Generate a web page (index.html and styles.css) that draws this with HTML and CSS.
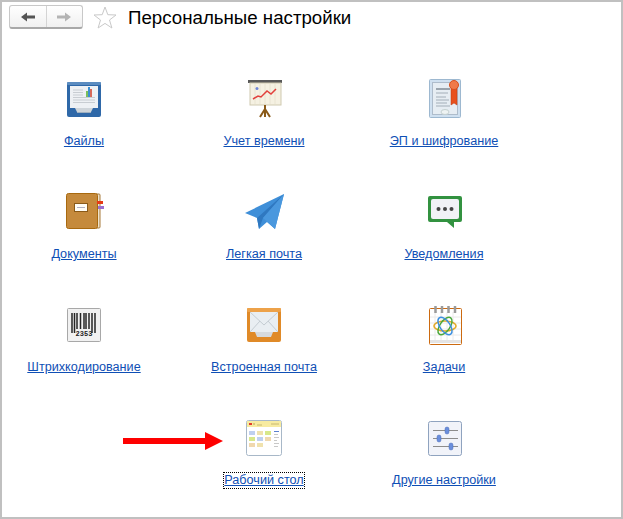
FILE: index.html
```html
<!DOCTYPE html>
<html lang="ru">
<head>
<meta charset="utf-8">
<title>Персональные настройки</title>
<link rel="stylesheet" href="styles.css">
</head>
<body>
<div class="window">
  <header class="header">
    <div class="nav">
      <button class="nav-btn" type="button" aria-label="Назад">
        <svg width="16" height="12" viewBox="0 0 16 12"><path d="M1 6 7 1.500V4.500H15V7.500H7V10.500Z" fill="#555"/></svg>
      </button>
      <button class="nav-btn" type="button" aria-label="Вперёд">
        <svg width="16" height="12" viewBox="0 0 16 12"><path d="M15 6 9 1.500V4.500H1V7.500H9V10.500Z" fill="#b4b4b4"/></svg>
      </button>
    </div>
    <svg class="star" width="24" height="23" viewBox="0 0 24 23"><path d="M12 1 14.800 8.700 23 9 16.500 14 18.900 22 12 17.400 5.100 22 7.500 14 1 9 9.200 8.700Z" fill="#fff" stroke="#c9c9c9"/></svg>
    <h1 class="title">Персональные настройки</h1>
  </header>

  <main class="grid">
    <div class="cell">
      <svg class="icon" viewBox="0 0 40 40"><rect x="3" y="3" width="34" height="35" rx="2" fill="#2f68a8"/><rect x="3" y="3" width="34" height="3" rx="1" fill="#5b8cc0"/><rect x="6" y="7" width="28" height="22" fill="#eef1f4"/><path d="M9 11h10M9 13.500h10M9 16h10M9 18.500h22M9 21h22M9 23.500h22" stroke="#c8cdd2"/><rect x="22" y="12" width="2" height="6" fill="#7bbf5a"/><rect x="24" y="8" width="2" height="10" fill="#3c8fd0"/><rect x="26" y="10" width="2" height="8" fill="#d86a5a"/><path d="M11 29h18l-2 4H13Z" fill="#cfd5da"/><rect x="13" y="33" width="14" height="1" fill="#9fb0c0"/></svg>
      <a class="link" href="#">Файлы</a>
    </div>
    <div class="cell">
      <svg class="icon" viewBox="0 0 40 40"><rect x="4" y="1" width="34" height="3" fill="#595959"/><rect x="6" y="4" width="31" height="22" fill="#f5f1e2" stroke="#cfc9b0"/><path d="M11 5v20M16 5v20M21 5v20M26 5v20M31 5v20" stroke="#e9e4d2"/><path d="M9 20l5-3 3 1 6-6 4 3 5-5" fill="none" stroke="#e2403c" stroke-width="1.500"/><circle cx="13" cy="9.500" r="1.500" fill="#6f86d8"/><path d="M21 26v12M21 30l-5 8M21 30l5 8" stroke="#8a5a18" stroke-width="2" fill="none"/></svg>
      <a class="link" href="#">Учет времени</a>
    </div>
    <div class="cell">
      <svg class="icon" viewBox="0 0 40 40"><rect x="5.500" y="0.500" width="31" height="38" rx="1" fill="#cfe0f0" stroke="#9db8d0"/><rect x="8.500" y="3.500" width="25" height="32" fill="#e6edf3" stroke="#aebccb"/><path d="M12 10h14" stroke="#9aa4ad" stroke-width="2"/><path d="M12 14h12M12 18h10M12 21h13M12 24h11M12 27h14" stroke="#a3aeb8"/><ellipse cx="21" cy="33" rx="4" ry="2.500" fill="#eef3f3" stroke="#c4d0d0"/><path d="M27 6h6v20l-3-2-3 2Z" fill="#e8501e" stroke="#b83a12" stroke-width=".5"/><circle cx="30" cy="6" r="4.500" fill="#f07a4a" stroke="#d8501e"/></svg>
      <a class="link" href="#">ЭП и шифрование</a>
    </div>

    <div class="cell">
      <svg class="icon" viewBox="0 0 40 40"><rect x="32" y="2" width="4" height="34" rx="1" fill="#eee3cd" stroke="#a87a3a"/><rect x="2.500" y="1.500" width="31" height="35" rx="2" fill="#c58a3c" stroke="#a8690f"/><rect x="10.500" y="11.500" width="13" height="8" fill="#fffdf5" stroke="#8a5a18"/><path d="M13 15.500h8" stroke="#b0b0c0"/><rect x="33" y="9" width="6" height="3" fill="#e63a14"/><rect x="34" y="14" width="6" height="3" fill="#9a6fd0"/></svg>
      <a class="link" href="#">Документы</a>
    </div>
    <div class="cell">
      <svg class="icon" viewBox="0 0 40 40"><path d="M40 2 1 21 13 26 15 37 23 30 31 37Z" fill="#3f8fd8"/><path d="M40 2 13 26 15 37 19 26Z" fill="#2f78c0"/><path d="M40 2 19 26 31 37Z" fill="#4a98de"/></svg>
      <a class="link" href="#">Легкая почта</a>
    </div>
    <div class="cell">
      <svg class="icon" viewBox="0 0 40 40"><path d="M6 4H36A2 2 0 0 1 38 6V28A2 2 0 0 1 36 30H30V36L23 30H6A2 2 0 0 1 4 28V6A2 2 0 0 1 6 4Z" fill="#329240"/><rect x="7" y="7" width="28" height="20" rx="2" fill="#f1f2f6"/><circle cx="14.500" cy="17" r="2" fill="#444"/><circle cx="21" cy="17" r="2" fill="#444"/><circle cx="27.500" cy="17" r="2" fill="#444"/></svg>
      <a class="link" href="#">Уведомления</a>
    </div>

    <div class="cell">
      <svg class="icon" viewBox="0 0 40 40"><rect x="3.500" y="3.500" width="33" height="33" rx="1" fill="#f1f1f1" stroke="#a8a8a8"/><path d="M8 8v20M10.500 8v20M13 8v16M16.500 8v16M20 8v16M22 8v16M25 8v16M28 8v20M31 8v20" stroke="#262626" stroke-width="1.500"/><text class="barcode-digits" x="20" y="31" text-anchor="middle">2353</text></svg>
      <a class="link" href="#">Штрихкодирование</a>
    </div>
    <div class="cell">
      <svg class="icon" viewBox="0 0 40 40"><rect x="3" y="3" width="34" height="34" rx="2" fill="#e08a28"/><rect x="3" y="3" width="34" height="4" rx="1" fill="#eda24a"/><rect x="6" y="7" width="28" height="20" fill="#e9eef2"/><path d="M6 7 20 20 34 7M6 27 16 16M34 27 24 16" fill="none" stroke="#c4ccd2"/><path d="M11 27h18l-2 5H13Z" fill="#d6dade"/></svg>
      <a class="link" href="#">Встроенная почта</a>
    </div>
    <div class="cell">
      <svg class="icon" viewBox="0 0 40 40"><rect x="5.500" y="3.500" width="32" height="36" rx="1" fill="#fff" stroke="#cc6a10"/><rect x="6" y="35" width="31" height="3" fill="#e4e4e4"/><path d="M11 7v28M17 7v28M23 7v28M29 7v28M6 12h31M6 18h31M6 24h31M6 30h31" stroke="#eaeaea"/><path d="M11.500 1v7M18 1v7M24.500 1v7M31 1v7" stroke="#9a9a9a" stroke-width="2.500"/><ellipse cx="21" cy="21" rx="11" ry="5" fill="none" stroke="#e2aa2a" stroke-width="1.500"/><ellipse cx="21" cy="21" rx="5" ry="10" fill="none" stroke="#4aa83c" stroke-width="1.500" transform="rotate(35 21 21)"/><ellipse cx="21" cy="21" rx="5" ry="10" fill="none" stroke="#3c8fe0" stroke-width="1.500" transform="rotate(-35 21 21)"/></svg>
      <a class="link" href="#">Задачи</a>
    </div>

    <div class="cell cell-second">
      <svg class="icon" viewBox="0 0 40 40"><rect x="2.500" y="2.500" width="35" height="35" rx="2" fill="#fff" stroke="#a8b8c8"/><path d="M3 3h34v6H3Z" fill="#f7eba0"/><rect x="5" y="5" width="3" height="2" fill="#e23c2c"/><rect x="9" y="5" width="2" height="2" fill="#d8c878"/><path d="M13 7h5M27 6h8" stroke="#c8b870"/><rect x="5" y="13" width="6" height="4" fill="#bfd0ef"/><rect x="13" y="13" width="6" height="4" fill="#f0e2ae"/><rect x="21" y="13" width="6" height="4" fill="#d8e88a"/><rect x="5" y="19" width="6" height="4" fill="#d8e88a"/><rect x="13" y="19" width="6" height="4" fill="#bfd0ef"/><rect x="21" y="19" width="6" height="4" fill="#f0d8ae"/><rect x="5" y="25" width="6" height="4" fill="#f0d8ae"/><rect x="13" y="25" width="6" height="4" fill="#f0e2ae"/><path d="M30 13.500h5" stroke="#5a80d0"/><path d="M30 16.500h4M30 19.500h5M30 22.500h3M30 25.500h5M30 28.500h4" stroke="#c8c8c8"/></svg>
      <a class="link link-focus" href="#">Рабочий стол</a>
    </div>
    <div class="cell">
      <svg class="icon" viewBox="0 0 40 40"><rect x="4.500" y="3.500" width="33" height="34" rx="2" fill="#f1f3f9" stroke="#8fa3bf"/><path d="M9 12.500H34M9 20.500H34M9 28.500H34" stroke="#8c8c8c"/><rect x="21" y="9" width="4" height="7" rx="2" fill="#6a8edc" stroke="#4a6cb8" stroke-width=".5"/><rect x="13" y="17" width="4" height="7" rx="2" fill="#6a8edc" stroke="#4a6cb8" stroke-width=".5"/><rect x="25" y="25" width="4" height="7" rx="2" fill="#6a8edc" stroke="#4a6cb8" stroke-width=".5"/></svg>
      <a class="link" href="#">Другие настройки</a>
    </div>
  </main>

  <svg class="arrow" width="100" height="18" viewBox="0 0 100 18"><path d="M0 6H82V0L100 9 82 18V12H0Z" fill="#fe0000"/></svg>
</div>
</body>
</html>
```
FILE: styles.css
```css
html, body {
  margin: 0;
  padding: 0;
  background: #fff;
}

.window {
  position: relative;
  box-sizing: border-box;
  width: 623px;
  height: 519px;
  border: 2px solid #c0c0c0;
  font-family: "Liberation Sans", Arial, sans-serif;
}

.header {
  display: flex;
  align-items: center;
  height: 24px;
  padding: 3px 0 0 7px;
}

.nav {
  display: flex;
  box-sizing: border-box;
  width: 74px;
  height: 24px;
  border: 1px solid #c8c8c8;
  border-bottom: 2px solid #a8a8a8;
  border-radius: 3px;
  background: linear-gradient(#fff, #f0f0f0);
}

.nav-btn {
  display: flex;
  align-items: center;
  justify-content: center;
  flex: 1;
  padding: 0;
  border: 0;
  background: transparent;
}

.nav-btn + .nav-btn {
  border-left: 1px solid #d4d4d4;
}

.star {
  flex: none;
  margin-left: 10px;
}

.title {
  margin: 2px 0 0 11px;
  font-size: 18.700px;
  font-weight: normal;
  color: #000;
  white-space: nowrap;
}

.grid {
  display: grid;
  grid-template-columns: repeat(3, 180px);
  grid-auto-rows: 113px;
  margin: 50px 0 0 -8px;
}

.cell {
  display: flex;
  flex-direction: column;
  align-items: center;
}

.cell-second {
  grid-column: 2;
}

.icon {
  display: block;
  width: 40px;
  height: 40px;
  overflow: visible;
}

.barcode-digits {
  font-family: "Liberation Mono", monospace;
  font-size: 7px;
  font-weight: bold;
  fill: #222;
}

.link {
  margin-top: 15px;
  font-size: 12.650px;
  line-height: 15px;
  color: #0f4fb5;
  white-space: nowrap;
}

.link-focus {
  outline: 1px dotted #000;
}

.arrow {
  position: absolute;
  left: 121px;
  top: 430px;
}
```
